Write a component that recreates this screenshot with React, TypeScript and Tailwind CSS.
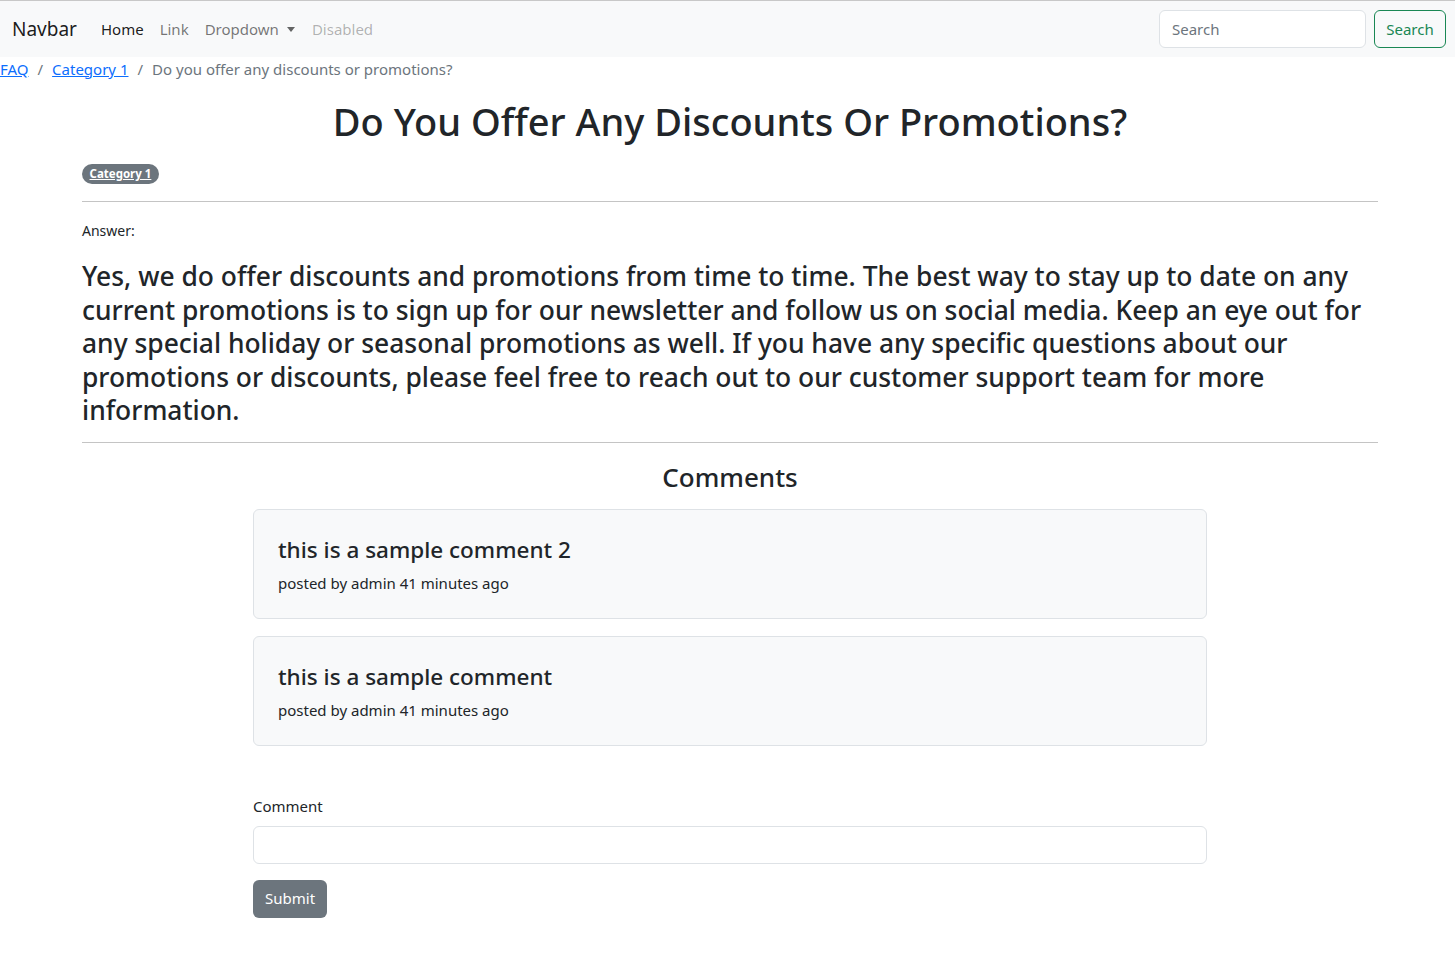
import React from "react";

const font = { fontFamily: '"Noto Sans", "Open Sans", sans-serif' };

export default function App() {
  return (
    <div className="min-h-[979px] bg-white text-[#212529] text-[15px] leading-[1.5]" style={font}>
      <nav className="border-t border-[#c8c8c8] bg-[#f8f9fa] h-[57px] flex items-center pl-[12px] pr-[9px]">
        <span className="text-[19px] text-[rgba(0,0,0,0.9)] mr-[16px]">Navbar</span>
        <ul className="flex items-center text-[15px]">
          <li className="px-[8px] text-[rgba(0,0,0,0.9)]">Home</li>
          <li className="px-[8px] text-[rgba(0,0,0,0.55)]">Link</li>
          <li className="px-[8px] text-[rgba(0,0,0,0.55)] flex items-center">
            Dropdown
            <span className="ml-[8px] w-0 h-0 border-l-[4.5px] border-r-[4.5px] border-t-[5px] border-l-transparent border-r-transparent border-t-[rgba(0,0,0,0.6)]" />
          </li>
          <li className="px-[9px] text-[rgba(0,0,0,0.3)]">Disabled</li>
        </ul>
        <div className="ml-auto flex items-center">
          <input
            placeholder="Search"
            className="w-[207px] h-[38px] rounded-[6px] border border-[#dee2e6] bg-white px-[12px] text-[15px] placeholder:text-[#6c757d] outline-none"
            style={font}
          />
          <button className="ml-[8px] h-[38px] w-[72px] rounded-[6px] border border-[#198754] text-[#198754] text-[15px]">
            Search
          </button>
        </div>
      </nav>

      <ol className="flex items-center text-[15px] h-[24px]">
        <li><a className="text-[#0d6efd] underline">FAQ</a></li>
        <li className="px-[9px] text-[#6c757d]">/</li>
        <li><a className="text-[#0d6efd] underline">Category 1</a></li>
        <li className="px-[9px] text-[#6c757d]">/</li>
        <li className="text-[#6c757d]">Do you offer any discounts or promotions?</li>
      </ol>

      <div className="ml-[82px] w-[1296px] pt-[16px]">
        <h1 className="text-center text-[38px] leading-[48px] font-medium mb-[19px]">
          Do You Offer Any Discounts Or Promotions?
        </h1>
        <div className="flex">
          <span className="bg-[#6c757d] rounded-full px-[7.5px] h-[20px] flex items-center text-[11.5px] font-bold text-white underline">
            Category 1
          </span>
        </div>
        <div className="mt-[17px] border-t border-[#c4c4c4]" />
        <p className="mt-[18px] text-[14px] leading-[21px]">Answer:</p>
        <h3 className="mt-[19px] text-[26.4px] leading-[33.6px] font-medium">
          Yes, we do offer discounts and promotions from time to time. The best way to stay up to date on any current promotions is to sign up for our newsletter and follow us on social media. Keep an eye out for any special holiday or seasonal promotions as well. If you have any specific questions about our promotions or discounts, please feel free to reach out to our customer support team for more information.
        </h3>
        <div className="mt-[14px] border-t border-[#c4c4c4]" />
        <h3 className="mt-[19px] text-center text-[26px] leading-[31px] font-medium">Comments</h3>

        <div className="w-[954px] mx-auto mt-[16px] flex flex-col gap-[17px]">
          {["this is a sample comment 2", "this is a sample comment"].map((c) => (
            <div key={c} className="bg-[#f8f9fa] border border-[#dee2e6] rounded-[6px] px-[24px] pt-[26px] pb-[23px]">
              <h4 className="text-[22.5px] leading-[28.8px] font-medium mb-[6px]">{c}</h4>
              <p className="text-[15px] leading-[24px]">posted by admin 41 minutes ago</p>
            </div>
          ))}
        </div>

        <div className="w-[954px] mx-auto mt-[49px]">
          <label className="block text-[15px] leading-[22px] mb-[9px]">Comment</label>
          <input className="block w-full h-[38px] rounded-[6px] border border-[#dee2e6] bg-white outline-none" />
          <button className="mt-[16px] h-[38px] px-[12px] rounded-[6px] bg-[#6c757d] text-white text-[15px]">
            Submit
          </button>
        </div>
      </div>
    </div>
  );
}
